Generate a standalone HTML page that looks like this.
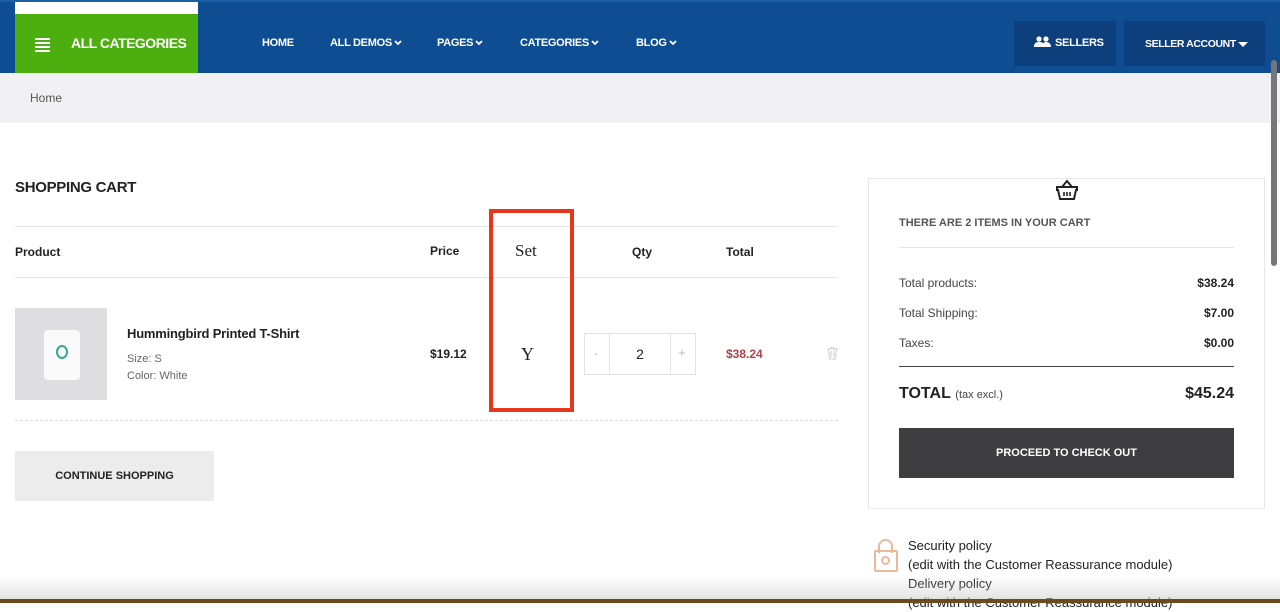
<!DOCTYPE html>
<html><head><meta charset="utf-8"><style>
*{margin:0;padding:0;box-sizing:border-box}
body{width:1280px;height:603px;overflow:hidden;background:#fff;font-family:"Liberation Sans",sans-serif;position:relative;color:#222}
.abs{position:absolute}
.hdr{left:0;top:0;width:1280px;height:73px;background:#0f4d92;border-top:2px solid #1a5fa8}
.nav{font-weight:bold;font-size:11px;color:#fff;top:37px;letter-spacing:-0.3px}
.nav svg{vertical-align:middle;margin-left:2px}
.b{font-weight:bold}
.sm{font-size:12px}
</style></head><body>
<div class="abs hdr"></div>
<div class="abs" style="left:15px;top:2px;width:183px;height:12px;background:#fff"></div>
<div class="abs" style="left:15px;top:14px;width:183px;height:59px;background:#4caf0f"></div>
<div class="abs" style="left:35px;top:38px;width:15px;height:2px;background:#fff;box-shadow:0 4px #fff,0 8px #fff,0 12px #fff"></div>
<div class="abs b" style="left:71px;top:35px;color:#fff;font-size:14px;letter-spacing:-0.5px">ALL CATEGORIES</div>
<div class="abs nav" style="left:262px">HOME</div>
<div class="abs nav" style="left:330px">ALL DEMOS<svg width="8" height="6" viewBox="0 0 8 6"><path d="M1 1l3 3 3-3" stroke="#fff" stroke-width="1.8" fill="none"/></svg></div>
<div class="abs nav" style="left:437px">PAGES<svg width="8" height="6" viewBox="0 0 8 6"><path d="M1 1l3 3 3-3" stroke="#fff" stroke-width="1.8" fill="none"/></svg></div>
<div class="abs nav" style="left:520px">CATEGORIES<svg width="8" height="6" viewBox="0 0 8 6"><path d="M1 1l3 3 3-3" stroke="#fff" stroke-width="1.8" fill="none"/></svg></div>
<div class="abs nav" style="left:636px">BLOG<svg width="8" height="6" viewBox="0 0 8 6"><path d="M1 1l3 3 3-3" stroke="#fff" stroke-width="1.8" fill="none"/></svg></div>
<div class="abs" style="left:1014px;top:21px;width:102px;height:45px;background:#0c3f7c"></div>
<svg class="abs" style="left:1034px;top:36px" width="17" height="12" viewBox="0 0 17 12"><circle cx="5" cy="3" r="2.6" fill="#fff"/><circle cx="12" cy="3" r="2.6" fill="#fff"/><path d="M0 11c0-4 2-5 5-5s5 1 5 5zM8 11c0-4 2-5 4-5s5 1 5 5z" fill="#fff"/></svg>
<div class="abs nav" style="left:1055px;top:37px">SELLERS</div>
<div class="abs" style="left:1124px;top:21px;width:141px;height:45px;background:#0c3f7c"></div>
<div class="abs nav" style="left:1145px;top:38px;font-size:10.5px;letter-spacing:-0.4px">SELLER ACCOUNT</div>
<svg class="abs" style="left:1238px;top:42px" width="10" height="6"><path d="M0 0h10L5 5z" fill="#fff"/></svg>
<div class="abs" style="left:0;top:73px;width:1280px;height:50px;background:#f1f0f2"></div>
<div class="abs sm" style="left:30px;top:91px;color:#555">Home</div>
<div class="abs" style="left:1271px;top:60px;width:6px;height:206px;background:#777;border-radius:3px"></div>
<div class="abs b" style="left:15px;top:179px;font-size:15px;letter-spacing:-0.3px">SHOPPING CART</div>
<div class="abs" style="left:15px;top:226px;width:823px;height:1px;background:#e5e5e5"></div>
<div class="abs" style="left:15px;top:277px;width:823px;height:1px;background:#e5e5e5"></div>
<div class="abs b sm" style="left:15px;top:245px">Product</div>
<div class="abs b sm" style="left:430px;top:244px">Price</div>
<div class="abs" style="left:515px;top:241px;font-family:'Liberation Serif',serif;font-size:17px">Set</div>
<div class="abs b sm" style="left:632px;top:245px">Qty</div>
<div class="abs b sm" style="left:726px;top:245px">Total</div>
<div class="abs" style="left:15px;top:308px;width:92px;height:92px;background:#dedddf"></div>
<div class="abs" style="left:44px;top:330px;width:36px;height:50px;background:#fafafa;border-radius:4px"></div>
<div class="abs" style="left:56px;top:345px;width:12px;height:14px;border:2px solid #3a8;border-radius:50%"></div>
<div class="abs b" style="left:127px;top:326px;font-size:13px;letter-spacing:-0.2px">Hummingbird Printed T-Shirt</div>
<div class="abs" style="left:127px;top:353px;font-size:11px;color:#666">Size: S</div>
<div class="abs" style="left:127px;top:370px;font-size:11px;color:#666">Color: White</div>
<div class="abs b sm" style="left:430px;top:347px">$19.12</div>
<div class="abs" style="left:489px;top:209px;width:85px;height:203px;border:4px solid #e8361e"></div>
<div class="abs" style="left:521px;top:344px;font-family:'Liberation Serif',serif;font-size:18px">Y</div>
<div class="abs" style="left:584px;top:333px;width:112px;height:42px;border:1px solid #e3e3e3"></div>
<div class="abs" style="left:609px;top:333px;width:62px;height:42px;border-left:1px solid #e3e3e3;border-right:1px solid #e3e3e3;text-align:center;line-height:42px;font-size:14px">2</div>
<div class="abs" style="left:594px;top:346px;color:#bbb;font-size:12px">-</div>
<div class="abs" style="left:678px;top:345px;color:#bbb;font-size:13px">+</div>
<div class="abs b sm" style="left:726px;top:347px;color:#b4404a">$38.24</div>
<svg class="abs" style="left:827px;top:347px" width="11" height="13" viewBox="0 0 11 13"><path d="M0 2h11M4 2V0h3v2M1.5 2l1 10h6l1-10M4 4v6M7 4v6" stroke="#ccc" fill="none"/></svg>
<div class="abs" style="left:15px;top:420px;width:823px;border-top:1px dashed #ddd"></div>
<div class="abs b" style="left:15px;top:451px;width:199px;height:50px;background:#ececed;font-size:11px;text-align:center;line-height:50px">CONTINUE SHOPPING</div>
<div class="abs" style="left:868px;top:178px;width:397px;height:331px;border:1px solid #e8e8e8"></div>
<svg class="abs" style="left:1055px;top:178px" width="24" height="24" viewBox="0 0 24 24"><path d="M7 9l5-6 5 6" stroke="#222" stroke-width="2" fill="none"/><path d="M2 9h20v3h-1l-2 9H5l-2-9H2z" stroke="#222" stroke-width="2" fill="none"/><path d="M9 14v4M12 14v4M15 14v4" stroke="#222" stroke-width="1.6"/></svg>
<div class="abs b" style="left:899px;top:217px;font-size:11px;color:#555">THERE ARE 2 ITEMS IN YOUR CART</div>
<div class="abs" style="left:899px;top:247px;width:335px;height:1px;background:#e5e5e5"></div>
<div class="abs sm" style="left:899px;top:276px;color:#444">Total products:</div><div class="abs b sm" style="right:46px;top:276px">$38.24</div>
<div class="abs sm" style="left:899px;top:306px;color:#444">Total Shipping:</div><div class="abs b sm" style="right:46px;top:306px">$7.00</div>
<div class="abs sm" style="left:899px;top:336px;color:#444">Taxes:</div><div class="abs b sm" style="right:46px;top:336px">$0.00</div>
<div class="abs" style="left:899px;top:366px;width:335px;height:1px;background:#444"></div>
<div class="abs" style="left:899px;top:385px;font-size:16px"><b>TOTAL</b> <span style="font-size:11px;color:#444">(tax excl.)</span></div>
<div class="abs b" style="right:46px;top:385px;font-size:16px">$45.24</div>
<div class="abs b" style="left:899px;top:428px;width:335px;height:50px;background:#3e3d3f;color:#fff;font-size:11px;text-align:center;line-height:50px">PROCEED TO CHECK OUT</div>
<div class="abs" style="left:874px;top:550px;width:24px;height:22px;border:2px solid #ecb89a;border-radius:2px"></div>
<div class="abs" style="left:878px;top:539px;width:15px;height:14px;border:2px solid #ecb89a;border-bottom:none;border-radius:8px 8px 0 0"></div>
<div class="abs" style="left:881px;top:556px;width:9px;height:9px;border:2px solid #ecb89a;border-radius:50%"></div>
<div class="abs" style="left:908px;top:536px;font-size:13px;line-height:19px;color:#222">Security policy<br>(edit with the Customer Reassurance module)<br>Delivery policy<br>(edit with the Customer Reassurance module)</div>
<div class="abs" style="left:0;top:575px;width:1280px;height:24px;background:linear-gradient(rgba(255,255,255,0),rgba(200,200,200,.5))"></div>
<div class="abs" style="left:0;top:599px;width:1280px;height:4px;background:#6b4a1e"></div>
</body></html>
